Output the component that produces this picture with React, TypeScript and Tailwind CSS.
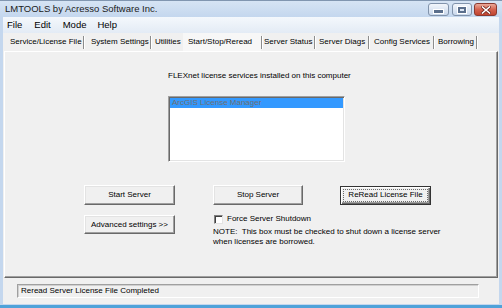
// LMTOOLS main window, Start/Stop/Reread tab

const tabs = [
  { label: 'Service/License File', cls: 'ml-[7px] w-[73px]', sep: true },
  { label: 'System Settings', cls: 'ml-[6px] w-[59px]', sep: true },
  { label: 'Utilities', cls: 'ml-[3px] w-[28px]', sep: false },
  { label: 'Start/Stop/Reread', cls: 'w-[78px] pl-[5px] bg-[#f7f7f7]', sep: true },
  { label: 'Server Status', cls: 'ml-[1px] w-[50px]', sep: true },
  { label: 'Server Diags', cls: 'ml-[3px] w-[49px]', sep: true },
  { label: 'Config Services', cls: 'ml-[4px] w-[59px]', sep: true },
  { label: 'Borrowing', cls: 'ml-[3px] w-[38px]', sep: true },
];

const raised =
  'border border-t-white border-l-white border-r-[#696969] border-b-[#696969] shadow-[inset_-1px_-1px_0_#a0a0a0,inset_1px_1px_0_#e3e3e3] bg-[#f0f0f0]';

function TitleButtons() {
  return (
    <div className="flex items-start mt-[2px] mr-[5px] gap-[3px]">
      <div className="w-[21px] h-[13px] rounded-[3px] border border-[#8193ab] bg-gradient-to-b from-[#f2f6fb] to-[#c9d8ec] flex items-center justify-center">
        <span className="mt-[4px] w-[9px] h-[3px] bg-[#5b6f8c] outline outline-1 outline-white" />
      </div>
      <div className="w-[20px] h-[13px] rounded-[3px] border border-[#8193ab] bg-gradient-to-b from-[#f2f6fb] to-[#c9d8ec] flex items-center justify-center">
        <span className="w-[8px] h-[6px] border-2 border-[#5b6f8c] outline outline-1 outline-white" />
      </div>
      <div className="w-[23px] h-[13px] -ml-[1px] rounded-[3px] border border-[#8a3a30] bg-gradient-to-b from-[#eaa999] via-[#d4624f] to-[#c0432f] flex items-center justify-center">
        <svg width="10" height="8" viewBox="0 0 10 8">
          <path d="M1.5 1 L8.5 7 M8.5 1 L1.5 7" stroke="#6e231b" strokeWidth="3" strokeLinecap="square" />
          <path d="M1.5 1 L8.5 7 M8.5 1 L1.5 7" stroke="#ffffff" strokeWidth="1.6" strokeLinecap="square" />
        </svg>
      </div>
    </div>
  );
}

export default function App() {
  return (
    <div className="w-[502px] h-[308px] flex flex-col overflow-hidden bg-[#c4d7ee] font-['Liberation_Sans',Arial,sans-serif] text-black border-t border-[#8196b0]">
      {/* Title bar */}
      <div className="h-[16px] flex items-start justify-between bg-gradient-to-b from-[#d6e4f4] to-[#c4d7ee]">
        <span className="pl-[5px] mt-[2px] text-[9.5px] leading-[12px] text-[#1b1b1b]">LMTOOLS by Acresso Software Inc.</span>
        <TitleButtons />
      </div>

      {/* Menu bar */}
      <div className="mx-[3px] h-[16px] flex items-center text-[9.5px] bg-gradient-to-b from-[#f4f8fc] to-[#e3ebf5]">
        <span className="ml-[4px]">File</span>
        <span className="ml-[12px]">Edit</span>
        <span className="ml-[12px]">Mode</span>
        <span className="ml-[11px]">Help</span>
      </div>

      {/* Client area */}
      <div className="mx-[3px] h-[271px] bg-[#f0f0f0] flex flex-col text-[8px] leading-[10px]">
        {/* Tabs */}
        <div className="h-[18px] flex items-center">
          {tabs.map(t => (
            <div key={t.label} className="flex items-center h-full">
              <div className={`h-full flex items-center whitespace-nowrap ${t.cls}`}>{t.label}</div>
              {t.sep && <span className="w-[2px] h-[13px] border-l border-[#8c8c8c] border-r border-r-white" />}
            </div>
          ))}
        </div>

        {/* Tab page */}
        <div className="mx-[1px] h-[227px] border border-t-white border-l-white border-r-[#696969] border-b-[#696969] shadow-[inset_-1px_-1px_0_#a0a0a0] flex flex-col">
          <div className="ml-[163px] mt-[19px] whitespace-nowrap">FLEXnet license services installed on this computer</div>

          <div className="ml-[163px] mt-[15px] w-[177px] h-[66px] bg-white border border-t-[#a0a0a0] border-l-[#a0a0a0] border-r-white border-b-white shadow-[inset_1px_1px_0_#696969,inset_-1px_-1px_0_#e3e3e3] p-[1px]">
            <div className="h-[10px] bg-[#3399ff] text-[#6f6f6f] pl-[2px] leading-[10px]">ArcGIS License Manager</div>
          </div>

          <div className="flex items-center mt-[23px] ml-[79px]">
            <button className={`w-[91px] h-[20px] ${raised}`}>Start Server</button>
            <button className={`ml-[38px] w-[90px] h-[20px] ${raised}`}>Stop Server</button>
            <button className="ml-[37px] w-[91px] h-[19px] flex bg-[#f0f0f0] border border-[#333333] shadow-[inset_1px_1px_0_#ffffff,inset_-1px_-1px_0_#696969,inset_-2px_-2px_0_#a0a0a0]">
              <span className="flex-1 m-[2px] flex items-center justify-center border border-dotted border-[#6a6a6a]">ReRead License File</span>
            </button>
          </div>

          <div className="flex items-start mt-[9px] ml-[79px]">
            <button className={`mt-[1px] w-[91px] h-[19px] ${raised}`}>Advanced settings &gt;&gt;</button>
            <div className="ml-[38px] flex flex-col">
              <div className="flex items-center h-[10px]">
                <span className="ml-[1px] w-[9px] h-[9px] bg-white border border-t-[#808080] border-l-[#808080] border-r-[#e3e3e3] border-b-[#e3e3e3] shadow-[inset_1px_1px_0_#404040]" />
                <span className="ml-[4px]">Force Server Shutdown</span>
              </div>
              <div className="mt-[3px] whitespace-nowrap">
                NOTE:&nbsp; This box must be checked to shut down a license server
                <br />
                when licenses are borrowed.
              </div>
            </div>
          </div>
        </div>

        {/* Status bar */}
        <div className="mt-[6px] ml-[14px] w-[462px] h-[14px] flex items-center pl-[3px] border border-t-[#a0a0a0] border-l-[#a0a0a0] border-r-white border-b-white shadow-[inset_1px_1px_0_#d0d0d0]">
          Reread Server License File Completed
        </div>
      </div>

      {/* Bottom frame */}
      <div className="h-[1px] bg-[#c4d7ee]" />
      <div className="h-[3px] bg-[#4fa2d9]" />
    </div>
  );
}
